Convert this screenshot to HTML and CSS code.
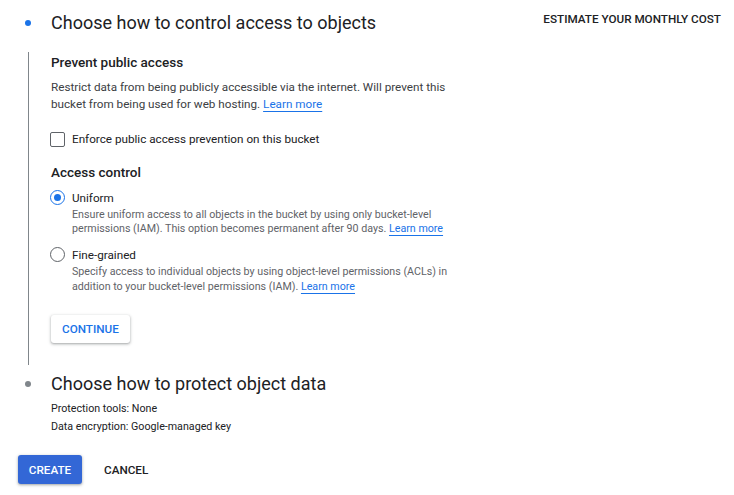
FILE: index.html
```html
<!DOCTYPE html>
<html lang="en">
<head>
<meta charset="utf-8">
<title>Create bucket</title>
<link rel="stylesheet" href="styles.css">
</head>
<body>
<div class="page">
  <main class="main">
    <section class="step">
      <div class="step-head">
        <span class="dot dot-active"></span>
        <h2 class="step-title">Choose how to control access to objects</h2>
      </div>
      <div class="step-body">
        <h3 class="sub-title">Prevent public access</h3>
        <p class="desc">Restrict data from being publicly accessible via the internet. Will prevent this bucket from being used for web hosting. <a class="link" href="#">Learn more</a></p>
        <label class="check-row">
          <span class="checkbox"></span>
          <span class="check-label">Enforce public access prevention on this bucket</span>
        </label>
        <h3 class="sub-title sub-title-access">Access control</h3>
        <div class="radio-option">
          <span class="radio radio-on"><span class="radio-inner"></span></span>
          <div class="radio-text">
            <div class="radio-label">Uniform</div>
            <div class="radio-desc">Ensure uniform access to all objects in the bucket by using only bucket-level permissions (IAM). This option becomes permanent after 90 days. <a class="link" href="#">Learn more</a></div>
          </div>
        </div>
        <div class="radio-option radio-option-second">
          <span class="radio"></span>
          <div class="radio-text">
            <div class="radio-label">Fine-grained</div>
            <div class="radio-desc">Specify access to individual objects by using object-level permissions (ACLs) in addition to your bucket-level permissions (IAM). <a class="link" href="#">Learn more</a></div>
          </div>
        </div>
        <button class="btn-continue" type="button">CONTINUE</button>
      </div>
    </section>
    <section class="step step-second">
      <div class="step-head">
        <span class="dot dot-idle"></span>
        <h2 class="step-title">Choose how to protect object data</h2>
      </div>
      <div class="step-summary">
        <div class="summary-line">Protection tools: None</div>
        <div class="summary-line">Data encryption: Google-managed key</div>
      </div>
    </section>
    <div class="actions">
      <button class="btn-create" type="button">CREATE</button>
      <button class="btn-cancel" type="button">CANCEL</button>
    </div>
  </main>
  <aside class="aside">
    <span class="estimate">ESTIMATE YOUR MONTHLY COST</span>
  </aside>
</div>
</body>
</html>
```
FILE: styles.css
```css
* { box-sizing: border-box; }
html, body { margin: 0; padding: 0; background: #fff; }
body {
  font-family: Roboto, "Liberation Sans", Arial, sans-serif;
  color: #202124;
  width: 734px;
  height: 495px;
  overflow: hidden;
}
.page {
  display: flex;
  justify-content: space-between;
}
.main {
  width: 470px;
}
.step-head {
  display: flex;
  align-items: center;
  height: 46px;
}
.dot {
  width: 6px;
  height: 6px;
  border-radius: 50%;
  margin-left: 25px;
  margin-right: 20px;
  flex: none;
}
.dot-active { background: #1a73e8; }
.dot-idle { background: #80868b; }
.step-title {
  margin: 0;
  font-size: 18px;
  font-weight: 400;
  line-height: 24px;
  color: #202124;
}
.step-body {
  margin-left: 28px;
  margin-top: 6px;
  border-left: 1px solid #80868b;
  padding-left: 22px;
  padding-bottom: 22px;
}
.sub-title {
  margin: 0;
  font-size: 13.5px;
  font-weight: 500;
  line-height: 20px;
  color: #202124;
}
.desc {
  margin: 7px 0 0;
  font-size: 11.7px;
  line-height: 17px;
  color: #3c4043;
  width: 400px;
}
.link {
  color: #1a73e8;
  text-decoration: underline;
  text-underline-offset: 3px;
}
.check-row {
  display: flex;
  align-items: center;
  height: 20px;
  margin-top: 16px;
  margin-left: -1px;
}
.checkbox {
  width: 15px;
  height: 15px;
  border: 1.5px solid #5f6368;
  border-radius: 2px;
  margin-right: 7px;
  flex: none;
}
.check-label {
  font-size: 11.7px;
  color: #202124;
}
.sub-title-access { margin-top: 13px; }
.radio-option {
  display: flex;
  align-items: flex-start;
  margin-top: 8px;
  margin-left: -1px;
}
.radio-option-second { margin-top: 11px; }
.radio {
  width: 15px;
  height: 15px;
  border: 1.5px solid #5f6368;
  border-radius: 50%;
  margin-right: 7px;
  flex: none;
  display: flex;
  align-items: center;
  justify-content: center;
}
.radio-on { border-color: #1a73e8; }
.radio-inner {
  width: 7px;
  height: 7px;
  border-radius: 50%;
  background: #1a73e8;
}
.radio-label {
  font-size: 11.7px;
  line-height: 16px;
  color: #202124;
}
.radio-desc {
  margin-top: 2px;
  font-size: 10.7px;
  line-height: 14px;
  color: #5f6368;
  width: 390px;
}
.radio-option-second .radio-desc {
  margin-top: 1px;
  line-height: 15px;
}
.btn-continue {
  margin-top: 21px;
  height: 28px;
  padding: 0 11px;
  border: none;
  border-radius: 3px;
  background: #fff;
  color: #1a73e8;
  font-family: Roboto, "Liberation Sans", Arial, sans-serif;
  font-size: 11.7px;
  font-weight: 500;
  box-shadow: 0 1px 2px rgba(60,64,67,0.3), 0 1px 3px 1px rgba(60,64,67,0.15);
}
.step-second .step-head {
  height: 32px;
  margin-top: 3px;
}
.step-summary {
  margin-top: 0;
  padding-left: 51px;
  font-size: 10.7px;
  line-height: 18px;
  color: #202124;
}
.actions {
  display: flex;
  align-items: center;
  margin-top: 19px;
  margin-left: 18px;
  gap: 8px;
}
.btn-create {
  height: 29px;
  width: 64px;
  border: none;
  border-radius: 3px;
  background: #3367d6;
  color: #fff;
  font-family: Roboto, "Liberation Sans", Arial, sans-serif;
  font-size: 11.7px;
  font-weight: 500;
  box-shadow: 0 1px 2px rgba(60,64,67,0.3), 0 1px 3px 1px rgba(60,64,67,0.15);
}
.btn-cancel {
  height: 29px;
  padding: 0 14px;
  border: none;
  background: transparent;
  color: #202124;
  font-family: Roboto, "Liberation Sans", Arial, sans-serif;
  font-size: 11.7px;
  font-weight: 500;
}
.aside {
  padding-top: 8px;
  padding-right: 13px;
}
.estimate {
  font-size: 11.7px;
  font-weight: 500;
  line-height: 14px;
  color: #202124;
}
```
